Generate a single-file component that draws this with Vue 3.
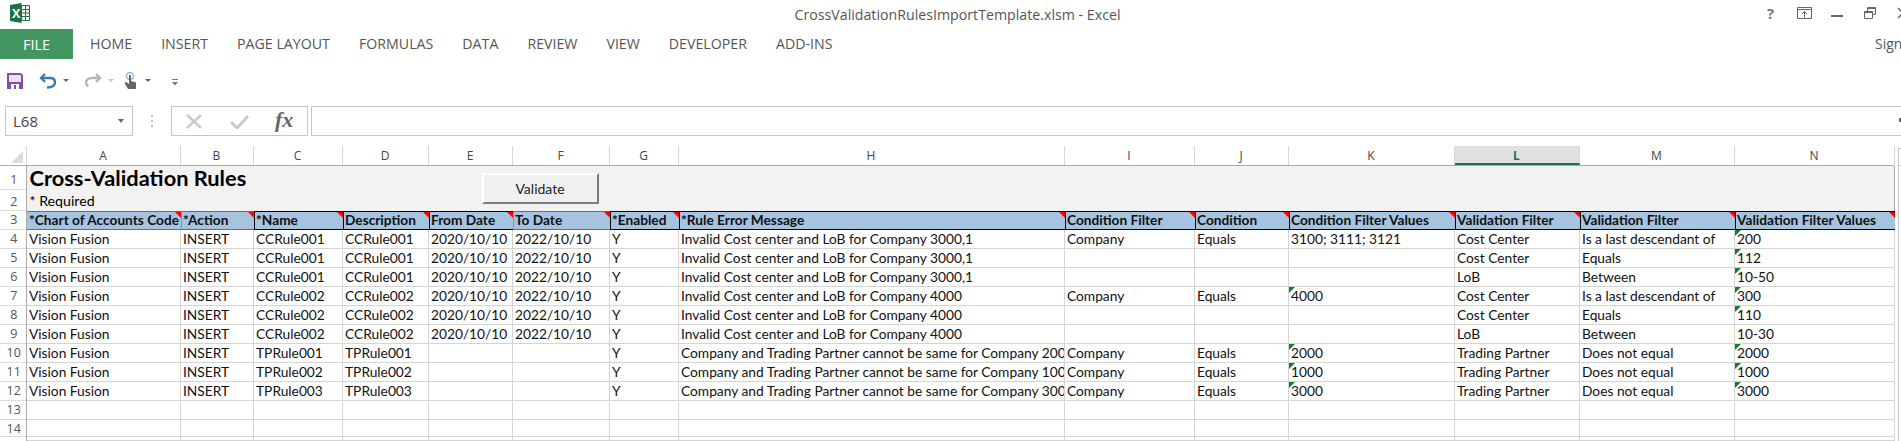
<script setup>
const cols = [
  { l: 'A', w: 154 }, { l: 'B', w: 73 }, { l: 'C', w: 89 }, { l: 'D', w: 86 }, { l: 'E', w: 84 },
  { l: 'F', w: 97 }, { l: 'G', w: 69 }, { l: 'H', w: 386 }, { l: 'I', w: 130 }, { l: 'J', w: 94 },
  { l: 'K', w: 166 }, { l: 'L', w: 125 }, { l: 'M', w: 155 }, { l: 'N', w: 160 }
]
const gridCols = { gridTemplateColumns: cols.map(c => c.w + 'px').join(' ') }
const headers = [
  { t: '*Chart of Accounts Code' }, { t: '*Action' }, { t: '*Name', s: 1 }, { t: 'Description', s: 1 },
  { t: 'From Date', e: 1 }, { t: 'To Date' }, { t: '*Enabled', s: 1 }, { t: '*Rule Error Message', s: 1 },
  { t: 'Condition Filter', s: 1 }, { t: 'Condition', s: 1 }, { t: 'Condition Filter Values', s: 1 },
  { t: 'Validation Filter', s: 1 }, { t: 'Validation Filter', s: 1 }, { t: 'Validation Filter Values', s: 1 }
]
const msgA = 'Invalid Cost center and LoB for Company 3000,1'
const msgB = 'Invalid Cost center and LoB for Company 4000'
const base = (n, from, msg) => ['Vision Fusion', 'INSERT', n, n, from ? '2020/10/10' : '', from ? '2022/10/10' : '', 'Y', msg]
const rows = [
  { n: 4, c: [...base('CCRule001', 1, msgA), 'Company', 'Equals', '3100; 3111; 3121', 'Cost Center', 'Is a last descendant of', '200'], g: [13] },
  { n: 5, c: [...base('CCRule001', 1, msgA), '', '', '', 'Cost Center', 'Equals', '112'], g: [13] },
  { n: 6, c: [...base('CCRule001', 1, msgA), '', '', '', 'LoB', 'Between', '10-50'], g: [13] },
  { n: 7, c: [...base('CCRule002', 1, msgB), 'Company', 'Equals', '4000', 'Cost Center', 'Is a last descendant of', '300'], g: [10, 13] },
  { n: 8, c: [...base('CCRule002', 1, msgB), '', '', '', 'Cost Center', 'Equals', '110'], g: [13] },
  { n: 9, c: [...base('CCRule002', 1, msgB), '', '', '', 'LoB', 'Between', '10-30'], g: [] },
  { n: 10, c: [...base('TPRule001', 0, 'Company and Trading Partner cannot be same for Company 2000'), 'Company', 'Equals', '2000', 'Trading Partner', 'Does not equal', '2000'], g: [10, 13] },
  { n: 11, c: [...base('TPRule002', 0, 'Company and Trading Partner cannot be same for Company 1000'), 'Company', 'Equals', '1000', 'Trading Partner', 'Does not equal', '1000'], g: [10, 13] },
  { n: 12, c: [...base('TPRule003', 0, 'Company and Trading Partner cannot be same for Company 3000'), 'Company', 'Equals', '3000', 'Trading Partner', 'Does not equal', '3000'], g: [10, 13] }
]
const blank = Array.from({ length: 14 }, (_, i) => i)
const tabs = ['HOME', 'INSERT', 'PAGE LAYOUT', 'FORMULAS', 'DATA', 'REVIEW', 'VIEW', 'DEVELOPER', 'ADD-INS']
</script>

<template>
  <div class="app">
    <header class="title">
      <svg class="xl" width="20" height="20" viewBox="0 0 20 20">
        <path d="M0 2 11.500 0v20L0 18z" fill="#1e7145" />
        <path d="M11.500 2.500H19.500V17.500H11.500z" fill="#fff" stroke="#1e7145" />
        <path d="M12 6.500h7M12 10h7M12 13.500h7M15.500 3v14" stroke="#1e7145" stroke-width="1" />
        <text x="2" y="14.500" fill="#fff" font-size="12.500" font-weight="700" font-family="Open Sans">X</text>
      </svg>
      <span class="doc">CrossValidationRulesImportTemplate.xlsm - Excel</span>
      <div class="winbtns">
        <span class="help">?</span>
        <svg width="15" height="12" viewBox="0 0 15 12"><path d="M.5.500h14v11H.5zM0 2.500h15M7.500 10.500V4.500M5 7l2.500-2.500L10 7" fill="none" stroke="#666" /></svg>
        <svg class="min" width="12" height="2" viewBox="0 0 12 2"><path d="M0 0h12v2H0z" fill="#666" /></svg>
        <svg width="12" height="12" viewBox="0 0 12 12"><path d="M.5 4.500h8v7h-8zM3.500 4V.5h8v7H9M.5 5.500h8M3.500 1.500h8" fill="none" stroke="#666" /></svg>
        <svg width="12" height="12" viewBox="0 0 12 12"><path d="M1 1l10 10M11 1 1 11" fill="none" stroke="#666" stroke-width="1.500" /></svg>
      </div>
    </header>

    <nav class="tabs">
      <span class="file">FILE</span>
      <span v-for="t in tabs" :key="t" class="tab">{{ t }}</span>
      <span class="sign">Sign</span>
    </nav>

    <div class="qat">
      <svg width="16" height="16" viewBox="0 0 16 16"><path d="M0 0h14l2 2v14H0z" fill="#8350a8" /><path d="M2 2h12v7H2z" fill="#e9e2f0" /><path d="M4 11h8v5H4z" fill="#fff" /><path d="M7 12h2v4H7z" fill="#8350a8" /></svg>
      <svg class="undo" width="18" height="16" viewBox="0 0 18 16"><path d="M6 1 2 5l4 4" fill="none" stroke="#3f78b5" stroke-width="2.400" /><path d="M2.500 5H11c3.500 0 5 2 5 4.500S14 14.500 8 14.500" fill="none" stroke="#3f78b5" stroke-width="2.400" /></svg>
      <i class="caret"></i>
      <svg class="redo" width="18" height="16" viewBox="0 0 18 16"><path d="M12 1l4 4-4 4" fill="none" stroke="#b5b5b5" stroke-width="2.400" /><path d="M15.500 5H8C4 5 2 7 2 9.500 2 11 3 12.500 4 13.500" fill="none" stroke="#b5b5b5" stroke-width="2.400" /></svg>
      <i class="caret light"></i>
      <svg class="touch" width="14" height="17" viewBox="0 0 14 17"><circle cx="6" cy="4" r="3.500" fill="none" stroke="#8fb6dc" stroke-width="1.500" /><path d="M5 3h2v6l5 1.500V17H4L.5 11 2 10l3 2z" fill="#666" /></svg>
      <i class="caret t"></i>
      <svg class="more" width="6" height="7" viewBox="0 0 6 7"><path d="M0 0h6v1H0zM0 3h6L3 6.500z" fill="#777" /></svg>
    </div>

    <div class="formula">
      <div class="namebox"><span>L68</span><i class="caret"></i></div>
      <span class="dots"></span>
      <div class="fxbox">
        <svg width="17" height="15" viewBox="0 0 17 15"><path d="M1 1l14 13M15 1 1 14" stroke="#c9c9c9" stroke-width="2.400" fill="none" /></svg>
        <svg width="19" height="15" viewBox="0 0 19 15"><path d="M1 8l6 6L18 2" stroke="#c9c9c9" stroke-width="3" fill="none" /></svg>
        <span class="fx">fx</span>
      </div>
      <div class="input"><i class="notch"></i></div>
    </div>

    <div class="heads">
      <div class="corner"><i></i></div>
      <div class="colgrid" :style="gridCols">
        <span v-for="c in cols" :key="c.l" class="colh" :class="{ active: c.l === 'L' }">{{ c.l }}</span>
      </div>
    </div>

    <div class="sheet">
      <div class="rownums">
        <span class="rn r1">1</span><span class="rn r2">2</span><span class="rn r3">3</span>
        <span v-for="r in rows" :key="r.n" class="rn">{{ r.n }}</span>
        <span class="rn">13</span><span class="rn r14">14</span>
      </div>
      <div class="body">
        <div class="banner">
          <div class="b-title">Cross-Validation Rules</div>
          <div class="b-req">* Required</div>
          <button class="validate">Validate</button>
        </div>
        <div class="row hdr" :style="gridCols">
          <div v-for="(h, i) in headers" :key="i" class="hc" :class="{ strong: h.s, edge: h.e }">{{ h.t }}<i class="red"></i></div>
        </div>
        <div v-for="r in rows" :key="r.n" class="row" :style="gridCols">
          <div v-for="(v, i) in r.c" :key="i" class="c"><i v-if="r.g.includes(i)" class="green"></i>{{ v }}</div>
        </div>
        <div class="row" :style="gridCols"><div v-for="b in blank" :key="b" class="c"></div></div>
        <div class="row last" :style="gridCols"><div v-for="b in blank" :key="b" class="c"></div></div>
        <div class="row stub" :style="gridCols"><div v-for="b in blank" :key="b" class="c"></div></div>
      </div>
    </div>
    <div class="scroll"><i></i></div>
  </div>
</template>

<style>
html, body { margin: 0; background: #fff; overflow: hidden; }
</style>

<style scoped>
.app { width: 1901px; height: 441px; overflow: hidden; position: relative; background: #fff; font-family: "Open Sans", sans-serif; color: #444; }
.title { height: 29px; position: relative; display: flex; justify-content: center; align-items: center; }
.xl { position: absolute; left: 10px; top: 3px; }
.doc { font-size: 14.200px; color: #555; margin-left: 14px; }
.winbtns { position: absolute; left: 1767px; top: 7px; display: flex; align-items: flex-start; width: 150px; height: 14px; }
.winbtns svg { flex: none; }
.help { font-weight: 700; color: #777; font-size: 15px; line-height: 13px; width: 8px; margin-right: 22px; }
.winbtns svg:nth-of-type(1) { margin-right: 19px; }
.winbtns svg:nth-of-type(2) { margin: 8px 21px 0 0; }
.winbtns svg:nth-of-type(3) { margin-right: 21px; }
.tabs { height: 30px; display: flex; align-items: center; position: relative; }
.file { width: 73px; height: 30px; background: #43965f; color: #fff; font-size: 14.500px; display: flex; align-items: center; justify-content: center; }
.tab { font-size: 14.200px; color: #555; margin-left: 17px; margin-right: 12px; white-space: nowrap; position: relative; top: -1px; }
.sign { position: absolute; left: 1875px; top: 5px; font-size: 14px; color: #555; }
.qat { height: 47px; display: flex; align-items: flex-start; padding: 14px 0 0 7px; box-sizing: border-box; }
.undo { margin-left: 16px; }
.redo { margin-left: 15px; }
.touch { margin-left: 10px; margin-top: -1px; }
.more { margin-left: 21px; margin-top: 6px; }
.caret { display: block; width: 0; height: 0; border: 3px solid transparent; border-top: 3px solid #666; border-bottom: 0; margin: 6px 0 0 6px; }
.caret.t { margin-left: 7px; }
.caret.light { border-top-color: #c2c2c2; }
.formula { height: 30px; display: flex; position: relative; box-sizing: border-box; }
.namebox { width: 128px; height: 30px; margin-left: 5px; box-sizing: border-box; border: 1px solid #c6c6c6; display: flex; align-items: center; padding: 0 8px 0 7px; justify-content: space-between; font-size: 15px; color: #444; }
.namebox .caret { margin: 0; border-width: 4px 3.500px 0; }
.dots { width: 2px; height: 12px; margin: 9px 18px 0 18px; background: repeating-linear-gradient(#bbb 0 2px, transparent 2px 5px); }
.fxbox { width: 137px; height: 30px; box-sizing: border-box; border: 1px solid #c6c6c6; display: flex; align-items: center; padding-left: 14px; gap: 27px; }
.fx { font-family: "Liberation Serif", serif; font-style: italic; font-weight: 700; font-size: 22px; color: #666; line-height: 1; margin-top: -3px; margin-left: -1px; }
.input { flex: 1; height: 30px; margin-left: 3px; box-sizing: border-box; border: 1px solid #c6c6c6; border-right: 0; position: relative; }
.notch { position: absolute; left: 1587px; top: 11px; width: 2px; height: 4px; background: #666; }
.heads { display: flex; height: 19px; margin-top: 10px; box-sizing: border-box; }
.corner { width: 26.500px; position: relative; border-right: 1px solid #d8d8d8; box-sizing: border-box; }
.corner i { position: absolute; right: 3px; bottom: 2px; width: 0; height: 0; border-style: solid; border-width: 0 0 12px 12px; border-color: transparent transparent #dcdcdc transparent; }
.colgrid { display: grid; height: 19px; }
.colh { font-size: 12px; text-align: center; line-height: 19px; color: #444; border-right: 1px solid #d8d8d8; box-sizing: border-box; }
.colh.active { background: #e1e1e1; color: #1e7145; font-weight: 700; border-bottom: 2px solid #1e7145; height: 19px; }
.sheet { display: flex; border-top: 1px solid #aaa; width: 1894px; }
.rownums { width: 26.500px; flex: none; display: flex; flex-direction: column; border-right: 1px solid #aaa; box-sizing: border-box; background: #fff; }
.rn { height: 19px; box-sizing: border-box; border-bottom: 1px solid #dcdcdc; font-size: 12.500px; text-align: center; line-height: 18px; padding-left: 2px; color: #555; }
.rn.r1 { height: 24px; line-height: 28px; }
.rn.r2 { height: 21px; line-height: 23px; }
.rn.r14 { height: 17px; }
.body { flex: none; position: relative; font-family: Lato, sans-serif; }
.banner { height: 45px; background: #f2f2f2; position: relative; color: #000; box-sizing: border-box; padding-left: 3px; border-right: 1px solid #aaa; }
.b-title { font-size: 21.800px; font-weight: 700; line-height: 24px; }
.b-req { font-size: 14.200px; line-height: 20px; margin-top: 1px; }
.validate { position: absolute; left: 455px; top: 7px; width: 117px; height: 31px; box-sizing: border-box; background: #f0f0f0; border: 2px solid; border-color: #fff #7d7d7d #7d7d7d #fff; font: 14px Lato, sans-serif; color: #222; padding: 0; }
.row { display: grid; height: 19px; }
.row.last { height: 17px; }
.row.stub { height: 4px; }
.hc { position: relative; background: #a6c3e0; border-top: 1px solid #5c6f84; border-bottom: 1px solid #5c6f84; border-left: 1px solid #7f93aa; box-sizing: border-box; height: 19px; font-size: 13.700px; font-weight: 700; color: #111; line-height: 16px; padding-left: 1.500px; white-space: nowrap; overflow: hidden; }
.hc:first-child { border-left: 0; padding-left: 2.500px; }
.hc.strong, .hc.edge { border-top-color: #000; border-bottom-color: #000; border-left-color: #000; }
.red { position: absolute; right: 0; top: 0; width: 0; height: 0; border-style: solid; border-width: 0 6px 6px 0; border-color: transparent #f00 transparent transparent; }
.c { position: relative; box-sizing: border-box; height: 100%; border-right: 1px solid #d4d4d4; border-bottom: 1px solid #d4d4d4; font-size: 13.750px; color: #111; line-height: 18px; padding-left: 2.500px; white-space: nowrap; overflow: hidden; }
.green { position: absolute; left: 0; top: 0; width: 0; height: 0; border-style: solid; border-width: 6px 6px 0 0; border-color: #0f7f2e transparent transparent transparent; }
.scroll { position: absolute; left: 1898px; top: 148px; width: 3px; height: 293px; border-left: 1px solid #c6c6c6; border-top: 1px solid #c6c6c6; }
.scroll i { display: block; height: 16px; border-bottom: 1px solid #c6c6c6; }
</style>
